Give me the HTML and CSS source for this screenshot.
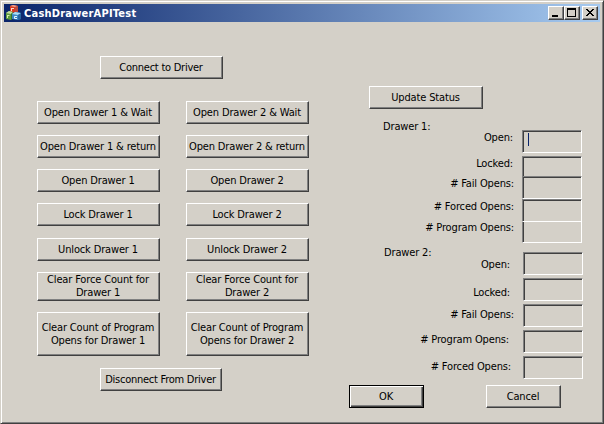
FILE: index.html
```html
<!DOCTYPE html>
<html lang="en">
<head>
<meta charset="utf-8">
<title>CashDrawerAPITest</title>
<link rel="stylesheet" href="styles.css">
</head>
<body>
<div class="window">
  <header class="titlebar">
    <svg class="app-icon" width="16" height="16" viewBox="0 0 16 16">
      <path d="M4 1l3-1 5 1v6l-3 1-5-1z" fill="#d9391f"/>
      <path d="M4 1l3-1 5 1-3 1z" fill="#f7a58e"/>
      <path d="M9 2l3-1v6l-3 1z" fill="#b94a40"/>
      <path d="M5 3.500h3M5.500 3v3" stroke="#fbd9d0" fill="none"/>
      <path d="M0 8l3-2 4 1v6l-2 2-5-1z" fill="#5d9c3e"/>
      <path d="M0 8l3-2 4 1-2 2z" fill="#c5dca0"/>
      <path d="M5 9l2-2v6l-2 2z" fill="#357328"/>
      <path d="M1.500 10v3M1.500 10.500h2" stroke="#d8efb0"/>
      <path d="M6 9l3-2 6 1v6l-3 1-6-1z" fill="#3a87c4"/>
      <path d="M6 9l3-2 6 1-3 2z" fill="#a8dcf4"/>
      <path d="M12 10l3-2v6l-3 1z" fill="#28649f"/>
      <path d="M11 11.500H8.500v2H11" stroke="#e5f5ff" fill="none"/>
    </svg>
    <h1 class="title">CashDrawerAPITest</h1>
    <div class="controls">
      <button class="control" aria-label="Minimize"><svg width="12" height="10" shape-rendering="crispEdges"><path d="M2 7h6v2H2z"/></svg></button>
      <button class="control" aria-label="Maximize"><svg width="12" height="10" shape-rendering="crispEdges"><path fill-rule="evenodd" d="M1 0h9v9H1zM2 2v6h7V2z"/></svg></button>
      <button class="control close" aria-label="Close"><svg width="12" height="10" shape-rendering="crispEdges"><path d="M2 1h2v1h1v1h2V2h1V1h2v1H9v1H8v1H7v1h1v1h1v1h1v1H8V7H7V6H5v1H4v1H2V7h1V6h1V5h1V4H4V3H3V2H2z"/></svg></button>
    </div>
  </header>
  <main class="content">
    <section class="commands">
      <button class="btn connect">Connect to Driver</button>
      <div class="grid">
        <button class="btn">Open Drawer 1 &amp; Wait</button><button class="btn">Open Drawer 2 &amp; Wait</button>
        <button class="btn">Open Drawer 1 &amp; return</button><button class="btn">Open Drawer 2 &amp; return</button>
        <button class="btn">Open Drawer 1</button><button class="btn">Open Drawer 2</button>
        <button class="btn">Lock Drawer 1</button><button class="btn">Lock Drawer 2</button>
        <button class="btn">Unlock Drawer 1</button><button class="btn">Unlock Drawer 2</button>
        <button class="btn">Clear Force Count for<br>Drawer 1</button><button class="btn">Clear Force Count for<br>Drawer 2</button>
        <button class="btn">Clear Count of Program<br>Opens for Drawer 1</button><button class="btn">Clear Count of Program<br>Opens for Drawer 2</button>
      </div>
      <button class="btn disconnect">Disconnect From Driver</button>
    </section>
    <section class="status">
      <button class="btn update">Update Status</button>
      <h2 class="group first">Drawer 1:</h2>
      <div class="rows drawer1">
        <div class="row"><span class="label">Open:</span><div class="field"><i class="caret"></i></div></div>
        <div class="row"><span class="label">Locked:</span><div class="field"></div></div>
        <div class="row fail"><span class="label"># Fail Opens:</span><div class="field"></div></div>
        <div class="row forced"><span class="label"># Forced Opens:</span><div class="field"></div></div>
        <div class="row program"><span class="label"># Program Opens:</span><div class="field"></div></div>
      </div>
      <h2 class="group second">Drawer 2:</h2>
      <div class="rows drawer2">
        <div class="row open"><span class="label">Open:</span><div class="field"></div></div>
        <div class="row locked"><span class="label">Locked:</span><div class="field"></div></div>
        <div class="row fail"><span class="label"># Fail Opens:</span><div class="field"></div></div>
        <div class="row program"><span class="label"># Program Opens:</span><div class="field"></div></div>
        <div class="row forced"><span class="label"># Forced Opens:</span><div class="field"></div></div>
      </div>
      <footer class="actions">
        <button class="btn ok">OK</button>
        <button class="btn">Cancel</button>
      </footer>
    </section>
  </main>
</div>
</body>
</html>
```

FILE: styles.css
```css
* { box-sizing: border-box; }
body {
  margin: 0;
  background: #d4d0c8;
  color: #000;
  font: 11px/13px "DejaVu Sans Condensed", "DejaVu Sans", sans-serif;
  font-stretch: condensed;
  letter-spacing: -0.15px;
  overflow: hidden;
}
h1, h2 { margin: 0; font: inherit; }
.window {
  width: 604px;
  height: 424px;
  padding: 2px;
  background: #d4d0c8;
  border: 1px solid;
  border-color: #d4d0c8 #404040 #404040 #d4d0c8;
  box-shadow: inset 1px 1px #fff, inset -1px -1px #808080;
}
.titlebar {
  display: flex;
  align-items: center;
  height: 18px;
  margin: 1px;
  padding: 0 2px;
  background: linear-gradient(90deg, #0a246a, #a6caf0);
}
.app-icon { flex: none; }
.title { flex: 1; margin-left: 2px; color: #fff; font-weight: bold; letter-spacing: 0.22px; }
.controls { display: flex; }
.control {
  width: 16px;
  height: 14px;
  padding: 1px;
  border: 1px solid;
  border-color: #fff #404040 #404040 #fff;
  background: #d4d0c8;
  box-shadow: inset -1px -1px #808080;
}
.control svg { display: block; }
.close { margin-left: 2px; }

.content { display: flex; margin-left: 34px; }
.commands { width: 272px; padding-top: 33px; }
.btn {
  display: block;
  width: 123px;
  height: 23px;
  padding: 0 1px 1px 0;
  border: 1px solid;
  border-color: #fff #404040 #404040 #fff;
  border-radius: 0;
  background: #d4d0c8;
  box-shadow: inset -1px -1px #808080;
  color: #000;
  font: inherit;
  letter-spacing: inherit;
  text-align: center;
  white-space: nowrap;
}
.connect { margin-left: 63px; letter-spacing: -0.25px; }
.grid {
  display: grid;
  grid-template-columns: 123px 123px;
  grid-template-rows: 34px 34px 34px 35px 34px 40px 44px;
  column-gap: 26px;
  margin-top: 22px;
}
.grid .btn:nth-child(n+11) { height: 29px; }
.grid .btn:nth-child(n+13) { height: 44px; }
.disconnect { width: 122px; margin: 12px 0 0 63px; letter-spacing: -0.25px; }

.status { width: 234px; margin-left: 40px; padding-top: 63px; }
.update { width: 114px; margin-left: 20px; }
.group { height: 13px; }
.first { margin: 11px 0 0 34px; }
.second { margin: 3px 0 0 35px; }
.rows { display: flex; flex-direction: column; }
.row { display: flex; justify-content: flex-end; height: 23px; }
.label { padding: 1px 9px 0 0; white-space: nowrap; }
.field {
  position: relative;
  width: 60px;
  height: 23px;
  border: 1px solid;
  border-color: #808080 #fff #fff #808080;
  background: #d4d0c8;
  box-shadow: inset 1px 1px #404040;
}
.caret { display: block; width: 1px; height: 13px; margin: 2px 0 0 5px; background: #0a246a; }
.drawer1 { margin: -3px 1px 0 0; gap: 3px; }
.drawer1 .fail { margin-top: -6px; }
.drawer1 .forced { margin-top: -3px; }
.drawer1 .forced .field { z-index: 1; }
.drawer1 .program { margin-top: -5px; }
.drawer1 .fail .label, .drawer1 .forced .label, .drawer1 .program .label { padding-right: 8px; }
.drawer2 { margin-top: -7px; gap: 3px; }
.drawer2 .open .label { padding: 6px 13px 0 0; }
.drawer2 .locked .label { padding: 8px 13px 0 0; }
.drawer2 .fail .label { padding: 4px 9px 0 0; }
.drawer2 .program .label { padding: 3px 14px 0 0; }
.drawer2 .forced .label { padding: 4px 12px 0 0; }
.actions { display: flex; gap: 62px; margin-top: 6px; }
.actions .btn { width: 75px; }
.actions .ok {
  border-color: #000;
  box-shadow: inset 1px 1px #fff, inset -1px -1px #404040, inset -2px -2px #808080;
}
```
